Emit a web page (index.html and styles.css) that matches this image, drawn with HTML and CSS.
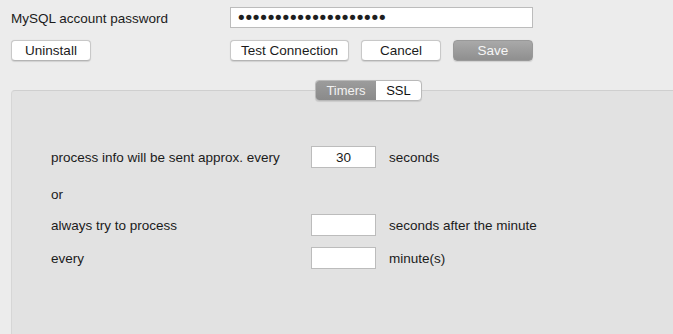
FILE: index.html
```html
<!DOCTYPE html>
<html lang="en">
<head>
  <meta charset="UTF-8" />
  <title>MySQL settings</title>
  <link rel="stylesheet" href="styles.css">
</head>
<body>
  <div class="account">
    <div class="field-row">
      <label class="account-label" for="mysqlPwd">MySQL account password</label>
      <input type="password" id="mysqlPwd" class="pwd-input" value="aaaaaaaaaaaaaaaaaaaa" />
    </div>
    <div class="button-row">
      <button class="btn btn-uninstall">Uninstall</button>
      <div class="button-group">
        <button class="btn btn-test">Test Connection</button>
        <button class="btn btn-cancel">Cancel</button>
        <button class="btn btn-save">Save</button>
      </div>
    </div>
  </div>

  <div class="panel">
    <div class="tabs">
      <span class="tab tab-active">Timers</span>
      <span class="tab">SSL</span>
    </div>

    <div class="timer-row row-first">
      <span class="timer-label">process info will be sent approx. every</span>
      <input type="text" class="num-input" value="30" />
      <span class="unit">seconds</span>
    </div>
    <div class="timer-row row-or">
      <span class="timer-label">or</span>
    </div>
    <div class="timer-row row-third">
      <span class="timer-label">always try to process</span>
      <input type="text" class="num-input" value="" />
      <span class="unit">seconds after the minute</span>
    </div>
    <div class="timer-row row-fourth">
      <span class="timer-label">every</span>
      <input type="text" class="num-input" value="" />
      <span class="unit">minute(s)</span>
    </div>
  </div>
</body>
</html>
```

FILE: styles.css
```css
/* base */
* {
  box-sizing: border-box;
}
html, body {
  height: 100%;
}
body {
  margin: 0;
  background: #ececec;
  color: #1b1b1b;
  font-family: "Liberation Sans", Arial, sans-serif;
  font-size: 13.5px;
  overflow: hidden;
}

/* account area */
.account {
  padding: 7px 0 0 11px;
}
.field-row {
  display: flex;
  align-items: center;
}
.account-label {
  width: 219px;
  padding-top: 2px;
}
.pwd-input {
  width: 303px;
  height: 21px;
  border: 1px solid #bcbcbc;
  background: #fff;
  padding: 0 0 0 5px;
  font-family: "DejaVu Sans", sans-serif;
  font-size: 18px;
  letter-spacing: -3.2px;
  color: #1e1e1e;
  outline: none;
}

.button-row {
  display: flex;
  margin-top: 12px;
}
.button-group {
  display: flex;
  gap: 12px;
  margin-left: 139px;
}
.btn {
  height: 21px;
  padding: 0;
  font-family: inherit;
  font-size: 13.5px;
  color: #1b1b1b;
  background: #fff;
  border: 1px solid #c8c8c8;
  border-bottom-color: #b4b4b4;
  border-radius: 4px;
  box-shadow: 0 0.5px 1px rgba(0, 0, 0, 0.12);
}
.btn-uninstall {
  width: 80px;
}
.btn-test {
  width: 119px;
}
.btn-cancel {
  width: 80px;
}
.btn-save {
  width: 80px;
  color: #f6f6f6;
  background: linear-gradient(#a9a9a9, #8f8f8f);
  border-color: #999;
}

/* timers panel */
.panel {
  margin: 29px 0 0 11px;
  height: 244px;
  background: #e2e2e2;
  border-top: 1px solid #cfcfcf;
  border-left: 1px solid #d6d6d6;
  border-radius: 4px 0 0 0;
  padding-left: 39px;
}
.tabs {
  display: flex;
  width: 107px;
  height: 21px;
  margin: -11px 0 0 264px;
  border: 1px solid #b9b9b9;
  border-radius: 4px;
  overflow: hidden;
  background: #fff;
  box-shadow: 0 0.5px 1px rgba(0, 0, 0, 0.1);
}
.tab {
  flex: 1;
  display: flex;
  align-items: center;
  justify-content: center;
  font-size: 13px;
  color: #111;
}
.tab-active {
  flex: 0 0 60px;
  background: linear-gradient(#9c9c9c, #8a8a8a);
  color: #f2f2f2;
}

.timer-row {
  display: flex;
  align-items: center;
  height: 22px;
}
.row-first {
  margin-top: 45px;
}
.row-or {
  margin-top: 15px;
}
.row-third {
  margin-top: 9px;
}
.row-fourth {
  margin-top: 11px;
}
.timer-label {
  width: 260px;
}
.num-input {
  width: 65px;
  height: 22px;
  border: 1px solid #bcbcbc;
  background: #fff;
  font-family: inherit;
  font-size: 13.5px;
  text-align: center;
  color: #1b1b1b;
  outline: none;
}
.unit {
  margin-left: 13px;
}
```
